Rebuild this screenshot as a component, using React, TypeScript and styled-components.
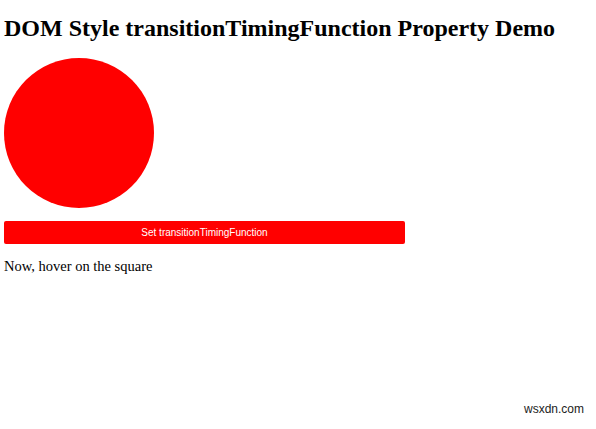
import React from 'react'
import styled, { createGlobalStyle } from 'styled-components'

const GlobalStyle = createGlobalStyle`
  html, body {
    margin: 0;
    padding: 0;
    background: #ffffff;
  }
  body {
    font-family: "Liberation Serif", "Times New Roman", serif;
    color: #000000;
  }
`

const Page = styled.div`
  position: relative;
  width: 596px;
  height: 429px;
  padding: 0 4px;
  box-sizing: border-box;
  display: flex;
  flex-direction: column;
  align-items: flex-start;
`

const Title = styled.h1`
  margin: 14px 0 0 0;
  font-size: 24px;
  line-height: 28px;
  font-weight: bold;
`

const Circle = styled.div`
  margin-top: 16px;
  width: 150px;
  height: 150px;
  border-radius: 50%;
  background: #ff0000;
`

const ActionButton = styled.button`
  margin-top: 13px;
  width: 401px;
  height: 23px;
  border: none;
  border-radius: 2px;
  background: #ff0000;
  color: #ffffff;
  font-family: "Liberation Sans", Arial, sans-serif;
  font-size: 10px;
  padding: 0;
  cursor: pointer;
`

const Note = styled.p`
  margin: 12px 0 0 0;
  font-size: 14.5px;
  line-height: 20px;
`

const Watermark = styled.span`
  position: absolute;
  right: 12px;
  bottom: 13px;
  font-family: "Liberation Sans", Arial, sans-serif;
  font-size: 12px;
  color: #222;
`

export default function App() {
  return (
    <>
      <GlobalStyle />
      <Page>
        <Title>DOM Style transitionTimingFunction Property Demo</Title>
        <Circle />
        <ActionButton>Set transitionTimingFunction</ActionButton>
        <Note>Now, hover on the square</Note>
        <Watermark>wsxdn.com</Watermark>
      </Page>
    </>
  )
}
